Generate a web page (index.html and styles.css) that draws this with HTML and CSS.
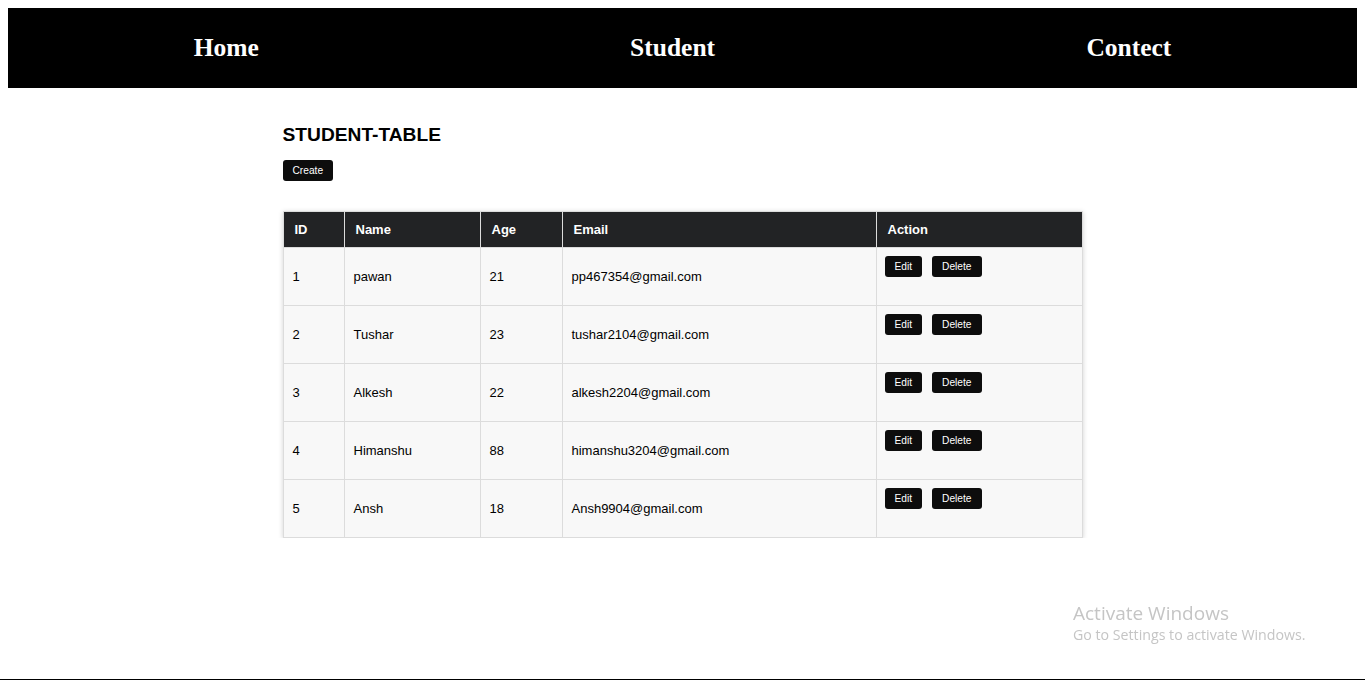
FILE: index.html
```html
<!DOCTYPE html>
<html lang="en">
<head>
<meta charset="utf-8">
<title>Student Table</title>
<link rel="stylesheet" href="styles.css">
</head>
<body>
<nav class="navbar">
  <a class="nav-link" href="#">Home</a>
  <a class="nav-link" href="#">Student</a>
  <a class="nav-link" href="#">Contect</a>
</nav>
<main class="container">
  <h2 class="title">STUDENT-TABLE</h2>
  <button class="btn">Create</button>
  <table class="table">
    <thead>
      <tr><th class="c-id">ID</th><th class="c-name">Name</th><th class="c-age">Age</th><th class="c-email">Email</th><th class="c-action">Action</th></tr>
    </thead>
    <tbody>
      <tr><td>1</td><td>pawan</td><td>21</td><td class="email">pp467354@gmail.com</td><td class="action"><button class="btn">Edit</button><button class="btn">Delete</button></td></tr>
      <tr><td>2</td><td>Tushar</td><td>23</td><td class="email">tushar2104@gmail.com</td><td class="action"><button class="btn">Edit</button><button class="btn">Delete</button></td></tr>
      <tr><td>3</td><td>Alkesh</td><td>22</td><td class="email">alkesh2204@gmail.com</td><td class="action"><button class="btn">Edit</button><button class="btn">Delete</button></td></tr>
      <tr><td>4</td><td>Himanshu</td><td>88</td><td class="email">himanshu3204@gmail.com</td><td class="action"><button class="btn">Edit</button><button class="btn">Delete</button></td></tr>
      <tr><td>5</td><td>Ansh</td><td>18</td><td class="email">Ansh9904@gmail.com</td><td class="action"><button class="btn">Edit</button><button class="btn">Delete</button></td></tr>
    </tbody>
  </table>
</main>
<div class="watermark">
  <div class="wm-title">Activate Windows</div>
  <div class="wm-sub">Go to Settings to activate Windows.</div>
</div>
<div class="bottom-line"></div>
</body>
</html>
```
FILE: styles.css
```css
html, body {
  margin: 0;
  padding: 0;
}
body {
  margin: 8px;
  background: #fff;
  font-family: "Liberation Sans", Arial, sans-serif;
}
.navbar {
  height: 80px;
  background: #000;
  display: flex;
  justify-content: space-around;
  align-items: center;
}
.nav-link {
  font-family: "Liberation Serif", "Times New Roman", serif;
  font-weight: bold;
  font-size: 25.5px;
  color: #fff;
  text-decoration: none;
}
.container {
  width: 800px;
  margin: 0 auto;
  padding-top: 36px;
}
.title {
  font-size: 19.2px;
  font-weight: bold;
  margin: 0 0 14px 0;
  line-height: 22px;
  color: #000;
}
.btn {
  font-family: "Liberation Sans", Arial, sans-serif;
  font-size: 10.2px;
  height: 21px;
  padding: 0 10px;
  background: #0d0d0d;
  color: #fff;
  border: none;
  border-radius: 3px;
  line-height: 21px;
  cursor: pointer;
}
.table {
  margin-top: 30px;
  width: 800px;
  border-collapse: collapse;
  border: 1px solid #dcdcdc;
  box-shadow: 0 1px 5px rgba(0, 0, 0, 0.18);
  font-size: 13px;
}
.table th {
  background: #222325;
  color: #fff;
  text-align: left;
  font-weight: bold;
  height: 36px;
  padding: 0 11px;
  box-sizing: border-box;
  border: 1px solid #dcdcdc;
}
.c-id { width: 61px; }
.c-name { width: 136px; }
.c-age { width: 82px; }
.c-email { width: 314px; }
.table td {
  background: #f8f8f8;
  color: #000;
  height: 58px;
  padding: 0 9px;
  box-sizing: border-box;
  border: 1px solid #dcdcdc;
  vertical-align: middle;
}
.table td.action {
  vertical-align: top;
  padding-top: 8px;
  padding-left: 8px;
}
.table td.action .btn + .btn {
  margin-left: 10px;
}
.watermark {
  position: fixed;
  left: 1073px;
  top: 600px;
  color: #c5c5c5;
  font-family: "Open Sans", "Noto Sans", sans-serif;
}
.wm-title {
  font-size: 19px;
  line-height: 26px;
}
.wm-sub {
  font-size: 14.2px;
  line-height: 18px;
}
.bottom-line {
  position: fixed;
  left: 0;
  right: 0;
  bottom: 0;
  height: 1px;
  background: #000;
}
```
